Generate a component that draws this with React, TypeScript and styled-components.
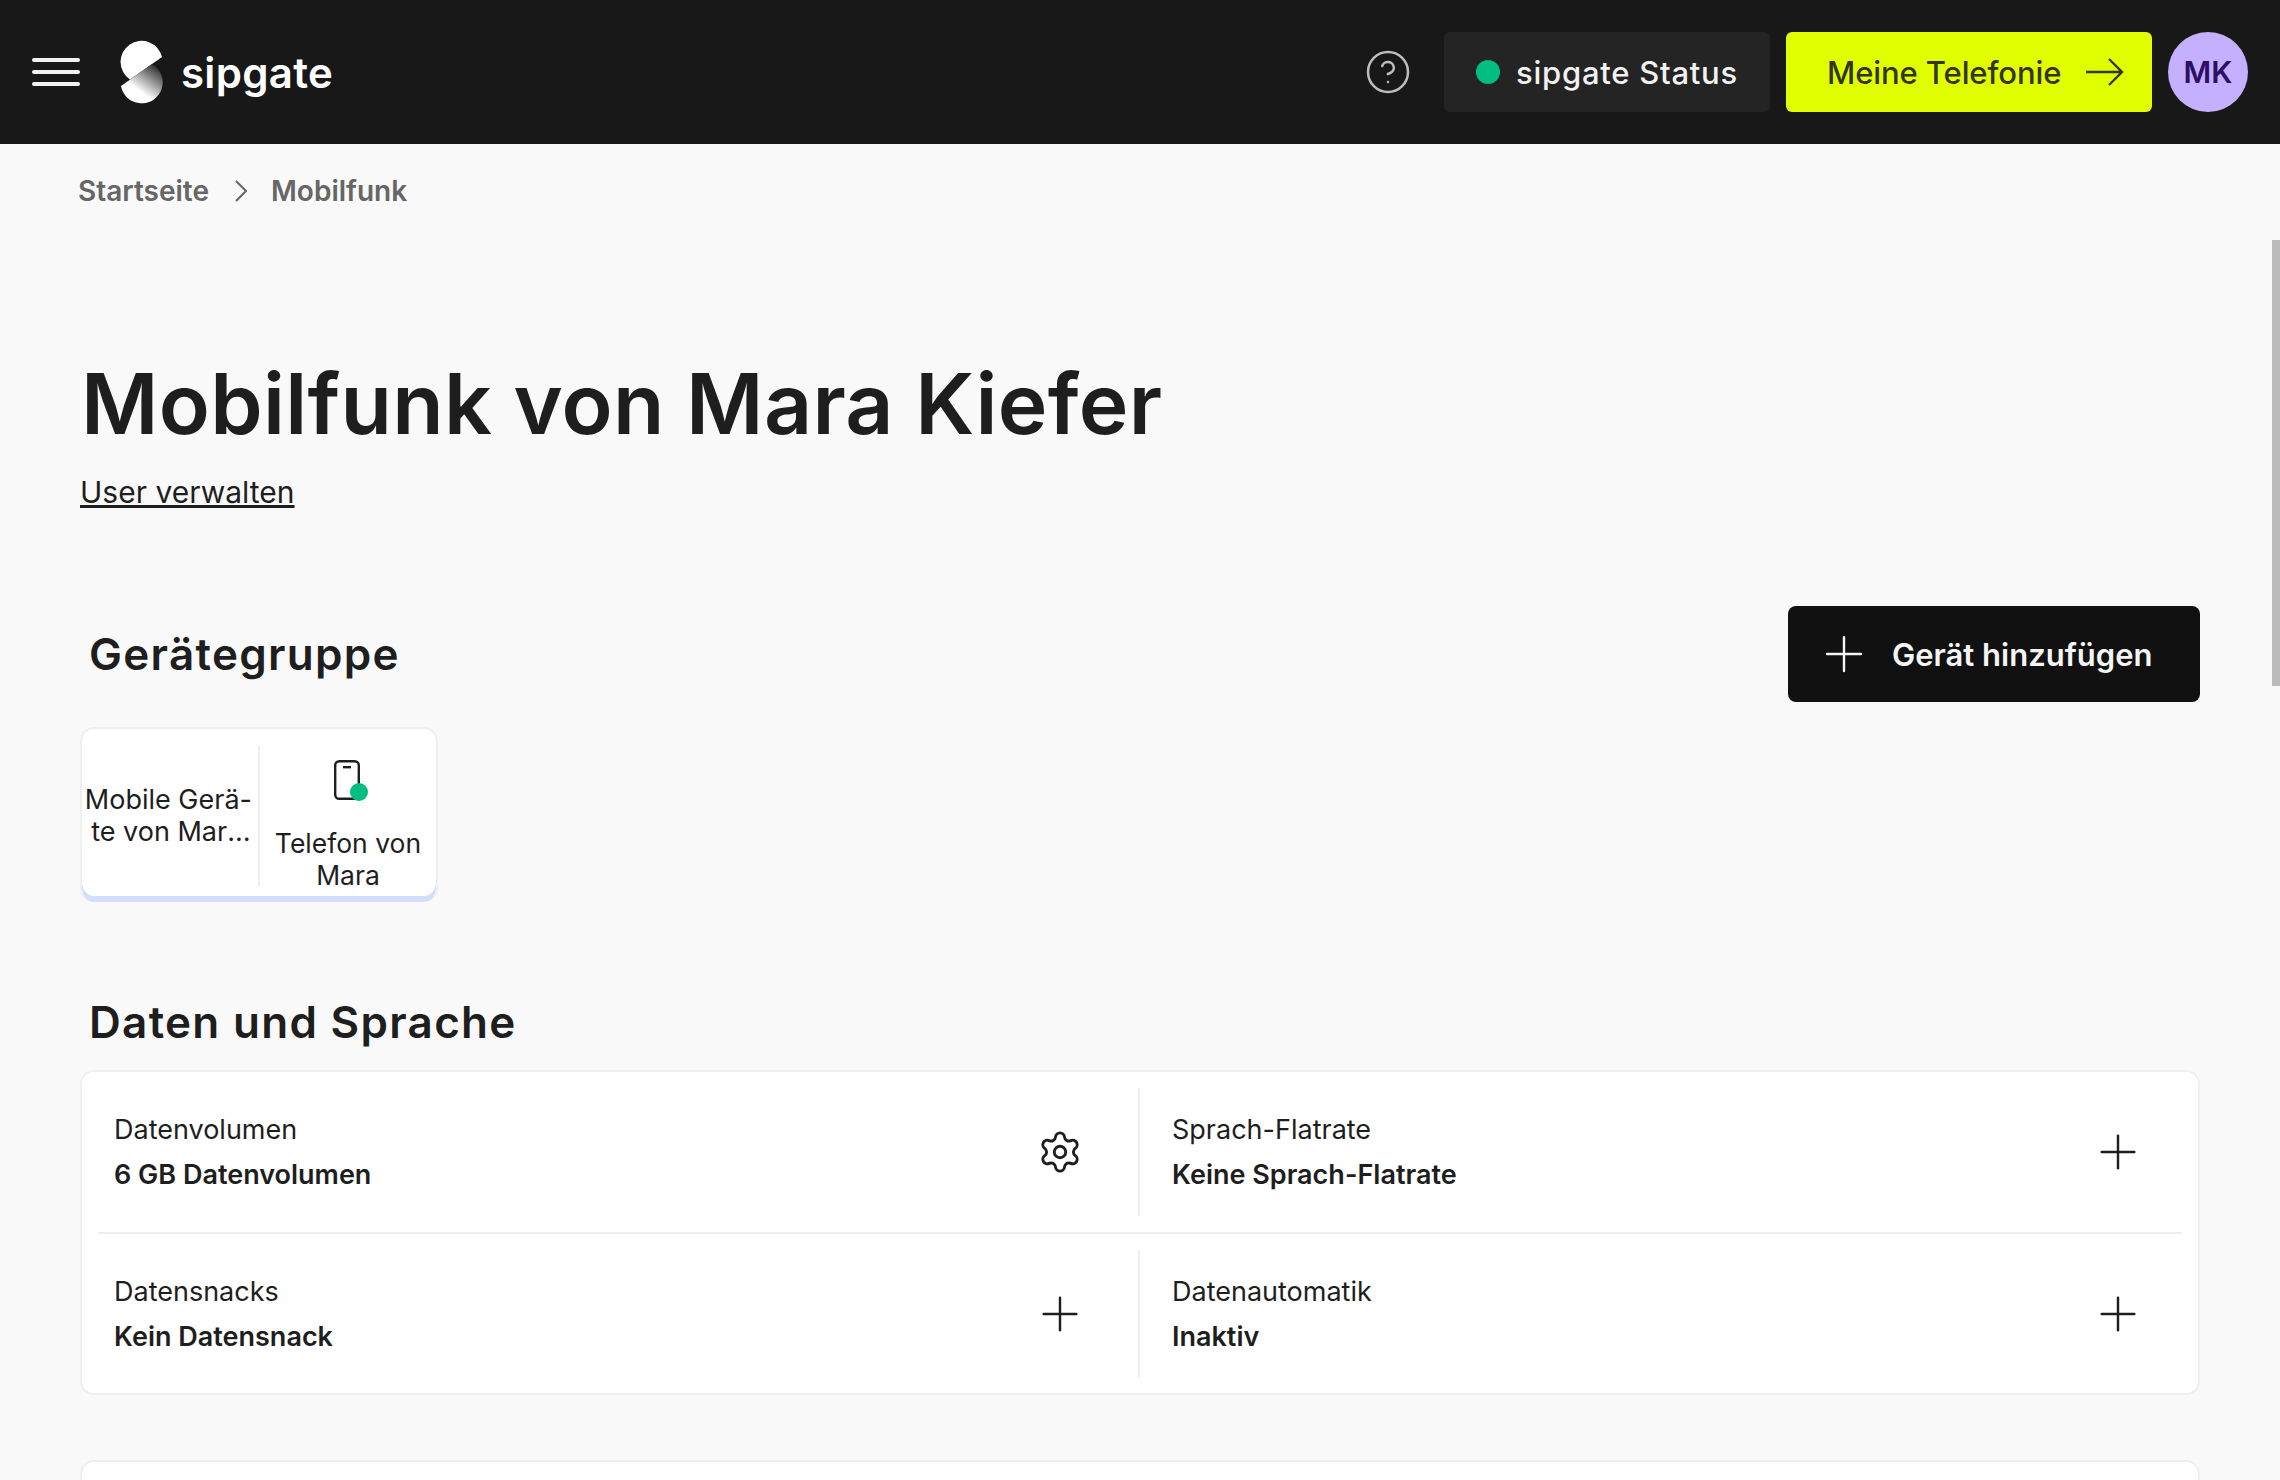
import styled, { createGlobalStyle } from "styled-components";
import { CircleHelp, Plus, Settings } from "lucide-react";

const rows = [
  [
    { label: "Datenvolumen", value: "6 GB Datenvolumen", icon: "settings" },
    { label: "Sprach-Flatrate", value: "Keine Sprach-Flatrate", icon: "plus" },
  ],
  [
    { label: "Datensnacks", value: "Kein Datensnack", icon: "plus" },
    { label: "Datenautomatik", value: "Inaktiv", icon: "plus" },
  ],
];

export default function App() {
  return (
    <>
      <GlobalStyle />
      <Page>
        <Header>
          <Burger>
            <i />
            <i />
            <i />
          </Burger>
          <Logo>
            <svg width="44" height="64" viewBox="0 0 44 64">
              <defs>
                <linearGradient id="logoFade" gradientUnits="userSpaceOnUse" x1="36" y1="25" x2="18" y2="50">
                  <stop offset="0" stopColor="#2a2a2a" />
                  <stop offset="1" stopColor="#ffffff" />
                </linearGradient>
              </defs>
              <path d="M42 17A21 21 0 1 0 10 39.4Z" fill="#fff" />
              <path d="M1 46A21 21 0 1 0 32 24Z" fill="url(#logoFade)" />
            </svg>
            <LogoText>sipgate</LogoText>
          </Logo>
          <HeaderRight>
            <HelpIcon>
              <CircleHelp size={48} strokeWidth={1.25} />
            </HelpIcon>
            <StatusButton>
              <StatusDot />
              sipgate Status
            </StatusButton>
            <TelefonieButton>
              Meine Telefonie
              <svg width="38" height="28" viewBox="0 0 38 28" fill="none" stroke="#33341a" strokeWidth="2.4">
                <path d="M0 14H36M23 1l13 13-13 13" />
              </svg>
            </TelefonieButton>
            <Avatar>MK</Avatar>
          </HeaderRight>
        </Header>

        <Main>
          <Breadcrumb>
            <span>Startseite</span>
            <svg width="14" height="24" viewBox="0 0 14 24" fill="none" stroke="#666" strokeWidth="2">
              <path d="M3 2l10 10L3 22" />
            </svg>
            <span>Mobilfunk</span>
          </Breadcrumb>

          <Title>Mobilfunk von Mara Kiefer</Title>
          <UserLink>User verwalten</UserLink>

          <SectionRow>
            <SectionTitle>Gerätegruppe</SectionTitle>
            <AddButton>
              <Plus size={58} strokeWidth={1} />
              Gerät hinzufügen
            </AddButton>
          </SectionRow>

          <DeviceTile>
            <TileCell>
              <TileText>
                Mobile Gerä-
                <br />
                te von Mar<Ellipsis>…</Ellipsis>
              </TileText>
            </TileCell>
            <TileDevice>
              <PhoneIcon>
                <svg width="36" height="42" viewBox="0 0 36 42">
                  <rect x="1.2" y="1.2" width="23.6" height="37.6" rx="4" fill="none" stroke="#1e1e1e" strokeWidth="2.4" />
                  <rect x="9" y="6" width="8" height="2.4" fill="#1e1e1e" />
                  <circle cx="25" cy="32" r="9" fill="#00bd80" />
                </svg>
              </PhoneIcon>
              <TileName>
                Telefon von
                <br />
                Mara
              </TileName>
            </TileDevice>
          </DeviceTile>

          <DataTitle>Daten und Sprache</DataTitle>
          <Card>
            {rows.map((row, i) => (
              <CardRow key={i} $first={i === 0}>
                {row.map((item) => (
                  <Cell key={item.label}>
                    <CellText>
                      <CellLabel>{item.label}</CellLabel>
                      <CellValue>{item.value}</CellValue>
                    </CellText>
                    <IconSlot>
                      {item.icon === "settings" ? (
                        <Settings size={46} strokeWidth={1.5} />
                      ) : (
                        <Plus size={56} strokeWidth={1.05} />
                      )}
                    </IconSlot>
                  </Cell>
                ))}
              </CardRow>
            ))}
          </Card>
          <NextCard />
        </Main>
        <ScrollThumb />
      </Page>
    </>
  );
}

const GlobalStyle = createGlobalStyle`
  html, body {
    margin: 0;
    height: 100%;
    overflow: hidden;
    background: #f9f9f9;
  }
  * {
    box-sizing: border-box;
  }
`;

const Page = styled.div`
  position: relative;
  width: 2280px;
  height: 1480px;
  overflow: hidden;
  font-family: Inter, "Liberation Sans", sans-serif;
  color: #1e1e1e;
`;

const Header = styled.header`
  display: flex;
  align-items: center;
  height: 144px;
  padding: 0 32px;
  background: #181818;
`;

const Burger = styled.div`
  display: flex;
  flex-direction: column;
  gap: 8px;
  width: 48px;
  margin-right: 40px;

  i {
    display: block;
    height: 4px;
    border-radius: 2px;
    background: #f2f2f2;
  }
`;

const Logo = styled.div`
  display: flex;
  align-items: center;
  gap: 17px;
`;

const LogoText = styled.span`
  font-size: 42px;
  font-weight: 600;
  letter-spacing: 0.3px;
  color: #fff;
`;

const HeaderRight = styled.div`
  display: flex;
  align-items: center;
  margin-left: auto;
`;

const HelpIcon = styled.div`
  display: flex;
  margin-right: 32px;
  color: #bdbdbd;
`;

const StatusButton = styled.div`
  display: flex;
  align-items: center;
  gap: 16px;
  width: 326px;
  height: 80px;
  padding-left: 32px;
  border-radius: 6px;
  background: #242424;
  color: #f2f2f2;
  font-size: 31px;
  font-weight: 500;
  letter-spacing: 0.75px;
`;

const StatusDot = styled.span`
  width: 24px;
  height: 24px;
  border-radius: 50%;
  background: #00bd80;
`;

const TelefonieButton = styled.div`
  display: flex;
  align-items: center;
  justify-content: space-between;
  width: 366px;
  height: 80px;
  margin-left: 16px;
  padding: 0 28px 0 41px;
  border-radius: 6px;
  background: #e0ff00;
  color: #33341a;
  font-size: 31px;
  font-weight: 500;
  letter-spacing: -0.1px;
`;

const Avatar = styled.div`
  display: flex;
  align-items: center;
  justify-content: center;
  width: 80px;
  height: 80px;
  margin-left: 16px;
  border-radius: 50%;
  background: #c4b0ff;
  color: #2e0f66;
  font-size: 30px;
  font-weight: 600;
`;

const Main = styled.main`
  padding: 0 80px;
`;

const Breadcrumb = styled.nav`
  display: flex;
  align-items: center;
  gap: 24px;
  height: 94px;
  margin-left: -2px;
  color: #666;
  font-size: 28px;
  font-weight: 600;
`;

const Title = styled.h1`
  margin: 114px 0 0 1px;
  font-size: 84px;
  line-height: 104px;
  font-weight: 600;
  letter-spacing: 0.3px;
  color: #1e1e1e;
`;

const UserLink = styled.a`
  display: block;
  margin-top: 16px;
  font-size: 30px;
  line-height: 40px;
  text-decoration: underline;
  color: #1e1e1e;
`;

const SectionRow = styled.div`
  display: flex;
  align-items: center;
  justify-content: space-between;
  margin-top: 94px;
`;

const SectionTitle = styled.h2`
  margin: 0 0 0 9px;
  font-size: 44px;
  line-height: 56px;
  font-weight: 600;
  letter-spacing: 1.3px;
`;

const AddButton = styled.div`
  display: flex;
  align-items: center;
  gap: 19px;
  width: 412px;
  height: 96px;
  padding-left: 27px;
  border-radius: 8px;
  background: #111;
  color: #f5f5f5;
  font-size: 31px;
  font-weight: 600;
`;

const DeviceTile = styled.div`
  display: grid;
  grid-template-columns: 178px 178px;
  align-items: center;
  width: 358px;
  height: 175px;
  margin-top: 25px;
  padding: 16px 0;
  border: 2px solid #efefef;
  border-bottom: 0;
  border-radius: 14px;
  background: #fff;
  box-shadow: inset 0 -6px 0 #d3defc;
`;

const TileCell = styled.div`
  display: flex;
  align-items: center;
  justify-content: flex-end;
  height: 142px;
  padding-right: 6px;
  border-right: 2px solid #efefef;
`;

const TileText = styled.div`
  font-size: 27px;
  line-height: 32px;
  text-align: right;
  white-space: nowrap;
`;

const Ellipsis = styled.span`
  letter-spacing: 1.5px;
`;

const TileDevice = styled.div`
  display: flex;
  flex-direction: column;
  align-items: center;
  height: 142px;
`;

const PhoneIcon = styled.div`
  display: flex;
  flex-shrink: 0;
  height: 82px;
  margin-left: 6px;
  padding-top: 15px;
`;

const TileName = styled.div`
  flex-shrink: 0;
  padding-right: 2px;
  font-size: 26.5px;
  line-height: 32px;
  text-align: center;
  white-space: nowrap;
`;

const DataTitle = styled(SectionTitle)`
  margin-top: 92px;
`;

const Card = styled.section`
  margin-top: 20px;
  padding: 16px 16px 15px;
  border: 2px solid #efefef;
  border-radius: 14px;
  background: #fff;
`;

const CardRow = styled.div<{ $first: boolean }>`
  display: grid;
  grid-template-columns: 1fr 1fr;
  height: ${(p) => (p.$first ? "146px" : "128px")};
  padding-bottom: ${(p) => (p.$first ? "16px" : "0")};
  margin-bottom: ${(p) => (p.$first ? "16px" : "0")};
  border-bottom: ${(p) => (p.$first ? "2px solid #efefef" : "0")};
`;

const Cell = styled.div`
  display: flex;
  align-items: center;
  justify-content: space-between;
  padding: 0 50px 0 16px;

  &:first-child {
    border-right: 2px solid #efefef;
  }
  &:last-child {
    padding-left: 32px;
    padding-right: 36px;
  }
`;

const CellText = styled.div`
  display: flex;
  flex-direction: column;
  gap: 13px;
`;

const CellLabel = styled.div`
  font-size: 27px;
  line-height: 32px;
`;

const CellValue = styled.div`
  font-size: 27px;
  line-height: 32px;
  font-weight: 600;
`;

const IconSlot = styled.div`
  display: flex;
  align-items: center;
  justify-content: center;
  width: 56px;
  height: 56px;
  color: #1e1e1e;
`;

const NextCard = styled.div`
  height: 200px;
  margin-top: 65px;
  border: 2px solid #efefef;
  border-radius: 14px;
  background: #fff;
`;

const ScrollThumb = styled.div`
  position: absolute;
  top: 240px;
  right: 0;
  width: 8px;
  height: 446px;
  background: #bbb;
`;
